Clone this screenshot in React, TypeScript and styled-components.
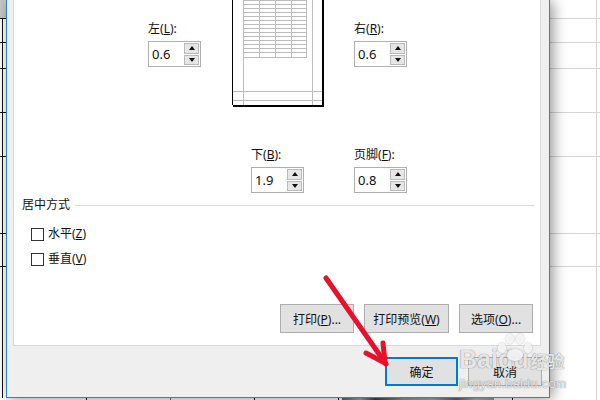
import React from "react";
import styled, { createGlobalStyle } from "styled-components";

const rowLines = [18, 42, 68, 112, 156, 233, 266];
const lineLayers = (color: string) =>
  rowLines.map(() => `linear-gradient(${color}, ${color})`).join(", ");
const linePositions = rowLines.map((y) => `0 ${y}px`).join(", ");

const GlobalStyle = createGlobalStyle`
  html, body {
    margin: 0;
    padding: 0;
    background: #fff;
  }
`;

const Screen = styled.div`
  position: relative;
  width: 600px;
  height: 400px;
  overflow: hidden;
  display: flex;
  flex-direction: column;
  font-family: "Noto Sans", "Noto Sans CJK SC", sans-serif;
  font-size: 12px;
  color: #111;
`;

const Workspace = styled.div`
  display: flex;
  height: 398px;
`;

const RowHeaders = styled.div`
  width: 6px;
  background-color: #fff;
  background-image:
    linear-gradient(#c8c8c8, #c8c8c8),
    linear-gradient(#111, #111),
    ${lineLayers("#111")};
  background-size: 100% 18px, 1px 100%, ${rowLines.map(() => "100% 1px").join(", ")};
  background-position: 0 0, 2px 0, ${linePositions};
  background-repeat: no-repeat;
`;

const SheetCells = styled.div`
  flex: 1;
  background-color: #fff;
  background-image:
    linear-gradient(#d4d4d4, #d4d4d4),
    ${lineLayers("#d4d4d4")};
  background-size: 1px 100%, ${rowLines.map(() => "100% 1px").join(", ")};
  background-position: 46px 0, ${linePositions};
  background-repeat: no-repeat;
`;

const Dialog = styled.div`
  position: relative;
  z-index: 1;
  box-sizing: border-box;
  width: 544px;
  display: flex;
  flex-direction: column;
  background: #efefef;
  border: 1px solid #2186d8;
  border-top: none;
  box-shadow: 3px 1px 13px rgba(0, 0, 0, 0.42);
`;

const TabPanel = styled.div`
  box-sizing: border-box;
  height: 346px;
  margin: 0 8px 0 6px;
  display: flex;
  flex-direction: column;
  background: #fff;
  border: 1px solid #d9d9d9;
  border-top: none;
  padding: 0 6px 12px 0;
`;

const TopMargins = styled.div`
  height: 146px;
  display: flex;
  align-items: flex-start;
  padding-left: 134px;
`;

const BottomMargins = styled.div`
  display: flex;
  gap: 50px;
  padding-left: 237px;
`;

const SideField = styled.div`
  margin-top: 20px;
`;

const PagePreview = styled.svg`
  display: block;
  width: 94px;
  height: 107px;
  margin: 0 28px 0 31px;
`;

const FieldLabel = styled.div`
  height: 18px;
  line-height: 18px;
  margin-bottom: 3px;
  white-space: nowrap;
`;

const Key = styled.span`
  text-decoration: underline;
  text-underline-offset: 1px;
`;

const Spinner = styled.div`
  box-sizing: border-box;
  width: 53px;
  height: 26px;
  display: flex;
  justify-content: space-between;
  padding: 1px 1px 1px 3px;
  background: #fff;
  border: 1px solid #b0b0b0;
  font-size: 13px;
  line-height: 22px;
`;

const SpinButtons = styled.div`
  width: 15px;
  display: flex;
  flex-direction: column;
  gap: 1px;
`;

const SpinButton = styled.div`
  box-sizing: border-box;
  flex: 1;
  display: flex;
  align-items: center;
  justify-content: center;
  background: #e6e6e6;
  border: 1px solid #bababa;
`;

const Triangle = styled.span<{ $down?: boolean }>`
  width: 0;
  height: 0;
  border-left: 3.5px solid transparent;
  border-right: 3.5px solid transparent;
  border-bottom: ${(p) => (p.$down ? "0" : "4px solid #111")};
  border-top: ${(p) => (p.$down ? "4px solid #111" : "0")};
`;

const Group = styled.div`
  margin-top: 3px;
  padding-left: 8px;
  flex: 1;
  display: flex;
  flex-direction: column;
`;

const GroupTitle = styled.div`
  display: flex;
  align-items: center;
  gap: 5px;
  height: 18px;
  line-height: 18px;
  white-space: nowrap;

  &::after {
    content: "";
    flex: 1;
    height: 1px;
    background: #d9d9d9;
  }
`;

const CheckList = styled.div`
  display: flex;
  flex-direction: column;
  gap: 7px;
  margin: 11px 0 0 9px;
`;

const CheckRow = styled.div`
  display: flex;
  align-items: center;
  gap: 4px;
  height: 18px;
  line-height: 18px;
`;

const CheckBox = styled.span`
  box-sizing: border-box;
  width: 13px;
  height: 13px;
  background: #fff;
  border: 1px solid #333;
`;

const PanelActions = styled.div`
  margin: auto 1px 0 0;
  display: flex;
  justify-content: flex-end;
  gap: 10px;
`;

const Button = styled.div<{ $width: number; $primary?: boolean }>`
  box-sizing: border-box;
  width: ${(p) => p.$width}px;
  height: 29px;
  display: flex;
  align-items: center;
  justify-content: center;
  white-space: nowrap;
  background: #e1e1e1;
  border: ${(p) => (p.$primary ? "2px solid #0078d7" : "1px solid #adadad")};
`;

const Footer = styled.div`
  display: flex;
  justify-content: flex-end;
  gap: 10px;
  padding: 11px 7px 0 0;
`;

const BottomEdge = styled.div`
  height: 2px;
  background-color: #fff;
  background-image:
    linear-gradient(#111, #111),
    linear-gradient(#777, #777),
    linear-gradient(#111, #111),
    linear-gradient(#111, #111),
    linear-gradient(#111, #111),
    linear-gradient(90deg, #59616f, #9ba6bd 12%, #39404c 22%, #8c93a3 40%, #a5a8b0 60%, #59616f 75%, #b0b3ba 88%, #999 100%),
    linear-gradient(#d4d4d4, #d4d4d4);
  background-size: 1px 100%, 1px 100%, 1px 100%, 1px 100%, 1px 100%, 152px 100%, 1px 100%;
  background-position: 86px 0, 170px 0, 254px 0, 338px 0, 512px 0, 342px 0, 596px 0;
  background-repeat: no-repeat;
`;

const Arrow = styled.svg`
  position: absolute;
  z-index: 3;
  left: 0;
  top: 0;
  pointer-events: none;
`;

const Watermark = styled.div`
  position: absolute;
  z-index: 2;
  left: 459px;
  top: 334px;
  width: 112px;
  color: rgba(255, 255, 255, 0.82);
  text-shadow: 0 0 1px rgba(90, 90, 90, 0.6), 0 0 1px rgba(90, 90, 90, 0.5);
  font-family: "Liberation Sans", sans-serif;
  pointer-events: none;
`;

const WatermarkPaw = styled.svg`
  display: block;
  width: 38px;
  height: 30px;
  margin-left: 37px;
  filter: drop-shadow(0 0 1px rgba(90, 90, 90, 0.5));
`;

const WatermarkBrand = styled.div`
  display: flex;
  align-items: baseline;
  gap: 2px;
  margin-top: -17px;
  font-weight: 700;
  font-size: 25px;
  line-height: 24px;
  white-space: nowrap;
`;

const WatermarkCn = styled.span`
  font-family: "Noto Sans CJK SC", sans-serif;
  font-size: 17px;
`;

const WatermarkUrl = styled.div`
  margin-top: 4px;
  font-size: 12.5px;
  line-height: 14px;
  letter-spacing: 0.4px;
  white-space: nowrap;
`;

const tableRows = [0, 4, 8, 12, 16, 20, 24, 28, 32, 36, 40, 44, 48, 52, 57];
const tableCols = [11, 27, 43, 59, 74];

const Page = () => (
  <PagePreview viewBox="0 0 94 107">
    <g stroke="#bcbcbc" strokeWidth="1" fill="none" shapeRendering="crispEdges">
      {tableRows.map((y) => (
        <line key={y} x1="11" x2="75" y1={y + 0.5} y2={y + 0.5} />
      ))}
      {tableCols.map((x) => (
        <line key={x} x1={x + 0.5} x2={x + 0.5} y1="0" y2="57" />
      ))}
      <line x1="11.5" x2="11.5" y1="57" y2="105" />
      <line x1="80.5" x2="80.5" y1="0" y2="105" />
      <line x1="1" x2="90" y1="91.5" y2="91.5" />
      <line x1="1" x2="90" y1="100.5" y2="100.5" />
    </g>
    <g fill="#000" shapeRendering="crispEdges">
      <rect x="0" y="0" width="1" height="105" />
      <rect x="90" y="0" width="2" height="107" />
      <rect x="1" y="105" width="91" height="2" />
    </g>
  </PagePreview>
);

const Field = ({ label, mnemonic, value }: { label: string; mnemonic: string; value: string }) => (
  <div>
    <FieldLabel>
      {label}(<Key>{mnemonic}</Key>):
    </FieldLabel>
    <Spinner>
      {value}
      <SpinButtons>
        <SpinButton>
          <Triangle />
        </SpinButton>
        <SpinButton>
          <Triangle $down />
        </SpinButton>
      </SpinButtons>
    </Spinner>
  </div>
);

export default function App() {
  return (
    <>
      <GlobalStyle />
      <Screen>
        <Workspace>
          <RowHeaders />
          <Dialog>
            <TabPanel>
              <TopMargins>
                <SideField>
                  <Field label="左" mnemonic="L" value="0.6" />
                </SideField>
                <Page />
                <SideField>
                  <Field label="右" mnemonic="R" value="0.6" />
                </SideField>
              </TopMargins>
              <BottomMargins>
                <Field label="下" mnemonic="B" value="1.9" />
                <Field label="页脚" mnemonic="F" value="0.8" />
              </BottomMargins>
              <Group>
                <GroupTitle>居中方式</GroupTitle>
                <CheckList>
                  <CheckRow>
                    <CheckBox />
                    <span>
                      水平(<Key>Z</Key>)
                    </span>
                  </CheckRow>
                  <CheckRow>
                    <CheckBox />
                    <span>
                      垂直(<Key>V</Key>)
                    </span>
                  </CheckRow>
                </CheckList>
                <PanelActions>
                  <Button $width={74}>
                    <span>
                      打印(<Key>P</Key>)...
                    </span>
                  </Button>
                  <Button $width={85}>
                    <span>
                      打印预览(<Key>W</Key>)
                    </span>
                  </Button>
                  <Button $width={74}>
                    <span>
                      选项(<Key>O</Key>)...
                    </span>
                  </Button>
                </PanelActions>
              </Group>
            </TabPanel>
            <Footer>
              <Button $width={73} $primary>
                确定
              </Button>
              <Button $width={74}>取消</Button>
            </Footer>
          </Dialog>
          <SheetCells />
        </Workspace>
        <BottomEdge />

        <Watermark>
          <WatermarkPaw viewBox="0 0 38 30">
            <g fill="currentColor">
              <ellipse cx="6" cy="14" rx="4" ry="5" />
              <ellipse cx="14" cy="5" rx="4" ry="5" />
              <ellipse cx="24" cy="5" rx="4" ry="5" />
              <ellipse cx="32" cy="14" rx="4" ry="5" />
              <ellipse cx="19" cy="21" rx="8" ry="6" />
            </g>
          </WatermarkPaw>
          <WatermarkBrand>
            Baidu<WatermarkCn>经验</WatermarkCn>
          </WatermarkBrand>
          <WatermarkUrl>jingyan.baidu.com</WatermarkUrl>
        </Watermark>

        <Arrow width="600" height="400" viewBox="0 0 600 400">
          <g fill="none" stroke="#e8112d" strokeLinecap="round">
            <path d="M326 278 L386 364" strokeWidth="5" />
            <path d="M383 343 L385 363" strokeWidth="5" />
            <path d="M366 353 L385 363" strokeWidth="5" />
          </g>
        </Arrow>
      </Screen>
    </>
  );
}
